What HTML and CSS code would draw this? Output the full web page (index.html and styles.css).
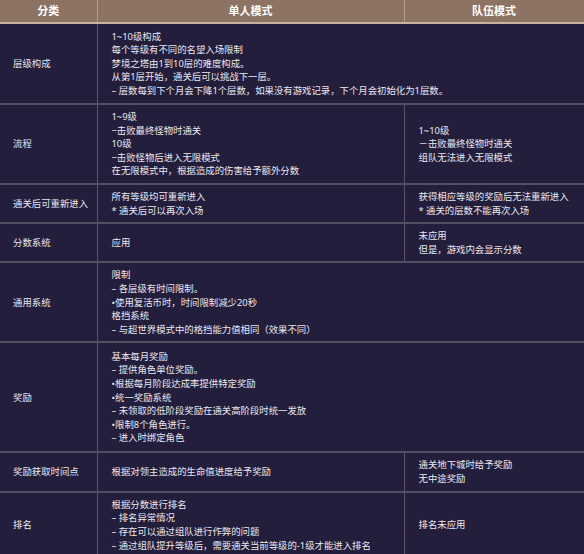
FILE: index.html
```html
<!DOCTYPE html>
<html lang="zh">
<head>
<meta charset="utf-8">
<link rel="stylesheet" href="styles.css">
</head>
<body>
<table class="tbl">
  <colgroup>
    <col class="c1"><col class="c2"><col class="c3">
  </colgroup>
  <thead>
    <tr><th>分类</th><th>单人模式</th><th>队伍模式</th></tr>
  </thead>
  <tbody>
    <tr class="r1">
      <td class="lbl">层级构成</td>
      <td colspan="2">1~10级构成<br>每个等级有不同的名望入场限制<br>梦境之塔由1到10层的难度构成。<br>从第1层开始，通关后可以挑战下一层。<br>– 层数每到下个月会下降1个层数，如果没有游戏记录，下个月会初始化为1层数。</td>
    </tr>
    <tr class="r2">
      <td class="lbl">流程</td>
      <td>1~9级<br>−击败最终怪物时通关<br>10级<br>−击败怪物后进入无限模式<br>在无限模式中，根据造成的伤害给予额外分数</td>
      <td>1~10级<br>－击败最终怪物时通关<br>组队无法进入无限模式</td>
    </tr>
    <tr class="r3">
      <td class="lbl">通关后可重新进入</td>
      <td>所有等级均可重新进入<br>* 通关后可以再次入场</td>
      <td>获得相应等级的奖励后无法重新进入<br>* 通关的层数不能再次入场</td>
    </tr>
    <tr class="r4">
      <td class="lbl">分数系统</td>
      <td>应用</td>
      <td>未应用<br>但是，游戏内会显示分数</td>
    </tr>
    <tr class="r5">
      <td class="lbl">通用系统</td>
      <td colspan="2">限制<br>– 各层级有时间限制。<br>•使用复活币时，时间限制减少20秒<br>格挡系统<br>– 与超世界模式中的格挡能力值相同（效果不同）</td>
    </tr>
    <tr class="r6">
      <td class="lbl">奖励</td>
      <td colspan="2">基本每月奖励<br>– 提供角色单位奖励。<br>•根据每月阶段达成率提供特定奖励<br>•统一奖励系统<br>– 未领取的低阶段奖励在通关高阶段时统一发放<br>•限制8个角色进行。<br>– 进入时绑定角色</td>
    </tr>
    <tr class="r7">
      <td class="lbl">奖励获取时间点</td>
      <td>根据对领主造成的生命值进度给予奖励</td>
      <td>通关地下城时给予奖励<br>无中途奖励</td>
    </tr>
    <tr class="r8">
      <td class="lbl">排名</td>
      <td>根据分数进行排名<br>– 排名异常情况<br>– 存在可以通过组队进行作弊的问题<br>– 通过组队提升等级后，需要通关当前等级的-1级才能进入排名</td>
      <td>排名未应用</td>
    </tr>
  </tbody>
</table>
</body>
</html>
```

FILE: styles.css
```css
html, body {
  margin: 0;
  padding: 0;
  background: #221e3c;
}
body {
  width: 584px;
  height: 554px;
  overflow: hidden;
}
.tbl {
  width: 584px;
  border-collapse: collapse;
  table-layout: fixed;
  font-family: "Noto Sans", "Noto Sans CJK SC", sans-serif;
  font-size: 9.4px;
  line-height: 13.6px;
  color: #ebe8f0;
  background: #221e3c;
  border-right: 1px solid #8a7f8c;
}
.c1 { width: 97px; }
.c2 { width: 307px; }
.c3 { width: 180px; }
.tbl th {
  background: #8c7363;
  color: #ffffff;
  font-family: "Noto Sans CJK SC", sans-serif;
  font-weight: bold;
  font-size: 11px;
  height: 22px;
  padding: 0;
  text-align: center;
  border-right: 1px solid #b39e90;
  border-bottom: 2px solid #c6b1a2;
}
.tbl td {
  padding: 5px 14px 5px 14px;
  vertical-align: middle;
  white-space: nowrap;
  border-right: 1px solid #5f5568;
  border-bottom: 2px solid #574d62;
}
.tbl td.lbl {
  padding-left: 13px;
  padding-right: 4px;
}
.r1 td { height: 69px; }
.r2 td { height: 68px; }
.r3 td { height: 26px; }
.r4 td { height: 27px; }
.r5 td { height: 68px; }
.r6 td { height: 98px; }
.r7 td { height: 25px; }
.r8 td { height: 55px; }
```
